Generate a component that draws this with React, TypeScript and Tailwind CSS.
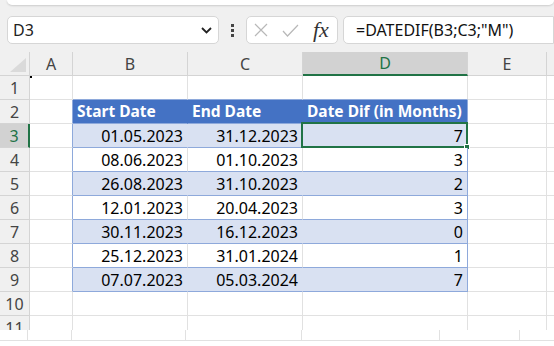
import React from "react";

const cols = [30, 43, 115, 115, 165, 79];
const colLetters = ["A", "B", "C", "D", "E", ""];

const data: [string, string, string][] = [
  ["01.05.2023", "31.12.2023", "7"],
  ["08.06.2023", "01.10.2023", "3"],
  ["26.08.2023", "31.10.2023", "2"],
  ["12.01.2023", "20.04.2023", "3"],
  ["30.11.2023", "16.12.2023", "0"],
  ["25.12.2023", "31.01.2024", "1"],
  ["07.07.2023", "05.03.2024", "7"],
];

function RowHeader({ n, selected }: { n: number; selected?: boolean }) {
  return (
    <div
      className={
        "h-[24px] flex items-center justify-center text-[16px] border-b border-[#d4d4d4] " +
        (selected
          ? "bg-[#d2d2d2] border-r-2 border-r-[#217346] text-[#217346]"
          : "bg-[#f0f0f0] border-r border-r-[#d4d4d4] text-[#444]")
      }
    >
      {n}
    </div>
  );
}

function Cell({
  children,
  className = "",
}: {
  children?: React.ReactNode;
  className?: string;
}) {
  return (
    <div
      className={
        "h-[24px] flex items-center border-b border-r px-[4px] overflow-visible whitespace-nowrap " +
        className
      }
    >
      {children}
    </div>
  );
}

export default function App() {
  const font = { fontFamily: '"Noto Sans", "Open Sans", sans-serif' };
  return (
    <div
      className="w-[554px] h-[346px] bg-[#f0f0f0] overflow-hidden relative"
      style={font}
    >
      {/* top white strip */}
      <div className="ml-[7px] h-[5px] bg-white rounded-b-[6px] shadow-[0_1px_2px_rgba(0,0,0,0.15)]" />

      {/* formula bar */}
      <div className="flex items-center h-[28px] mt-[11px]">
        <div className="ml-[7px] w-[212px] h-[28px] bg-white border border-[#d6d6d6] rounded-[5px] flex items-center justify-between pl-[5px] pr-[6px]">
          <span className="text-[16px] text-[#222]">D3</span>
          <svg width="11" height="7" viewBox="0 0 11 7">
            <path d="M1 1 L5.5 5.5 L10 1" fill="none" stroke="#222" strokeWidth="1.8" />
          </svg>
        </div>
        <div className="w-[27px] flex flex-col items-center gap-[2px]">
          <div className="w-[3px] h-[3px] bg-[#444]" />
          <div className="w-[3px] h-[3px] bg-[#444]" />
          <div className="w-[3px] h-[3px] bg-[#444]" />
        </div>
        <div className="w-[92px] h-[28px] bg-white border border-[#d6d6d6] rounded-[5px] flex items-center pl-[7px]">
          <svg width="14" height="14" viewBox="0 0 14 14">
            <path d="M1 1 L13 13 M13 1 L1 13" stroke="#b8b8b8" strokeWidth="1.2" fill="none" />
          </svg>
          <svg width="17" height="13" viewBox="0 0 17 13" className="ml-[14px]">
            <path d="M1 7 L5.5 12 L16 1" stroke="#b8b8b8" strokeWidth="1.2" fill="none" />
          </svg>
          <span
            className="ml-[14px] text-[22px] italic text-[#333] leading-none"
            style={{ fontFamily: '"Liberation Serif", serif' }}
          >
            fx
          </span>
        </div>
        <div className="ml-[5px] flex-1 h-[28px] bg-white border border-[#d6d6d6] rounded-l-[5px] flex items-center pl-[12px] text-[16px] text-[#111]">
          =DATEDIF(B3;C3;"M")
        </div>
      </div>

      {/* grid */}
      <div className="mt-[8px] h-[278px] overflow-hidden">
        <div
          className="grid"
          style={{ gridTemplateColumns: cols.map((c) => c + "px").join(" ") + " 1fr" }}
        >
          {/* column header row */}
          <div className="h-[24px] bg-[#f0f0f0] border-r border-b border-[#d4d4d4] relative">
            <svg className="absolute left-[10px] top-[6px]" width="16" height="14" viewBox="0 0 16 14">
              <path d="M16 0 L16 14 L0 14 Z" fill="#dadada" />
            </svg>
          </div>
          {colLetters.map((l, idx) => (
            <div
              key={idx}
              className={
                "h-[24px] flex items-center justify-center text-[16px] border-r border-[#d4d4d4] " +
                (l === "D"
                  ? "bg-[#d2d2d2] border-b-2 border-b-[#217346] text-[#217346]"
                  : "bg-[#f0f0f0] border-b text-[#444]")
              }
            >
              {l}
            </div>
          ))}

          {/* row 1 */}
          <RowHeader n={1} />
          <Cell className="bg-white border-[#e1e1e1] relative">
            <div className="absolute left-0 top-0 w-[2px] h-[2px] bg-black" />
          </Cell>
          <Cell className="bg-white border-r-[#e1e1e1] border-b-[#8ea9db]" />
          <Cell className="bg-white border-r-[#e1e1e1] border-b-[#8ea9db]" />
          <Cell className="bg-white border-r-[#e1e1e1] border-b-[#8ea9db]" />
          <Cell className="bg-white border-[#e1e1e1]" />
          <Cell className="bg-white border-[#e1e1e1]" />

          {/* row 2 header */}
          <RowHeader n={2} />
          <Cell className="bg-white border-b-[#e1e1e1] border-r-[#8ea9db]" />
          <Cell className="bg-[#4472c4] border-r-[#4472c4] border-b-[#8ea9db] text-white font-bold text-[15.5px]">
            Start Date
          </Cell>
          <Cell className="bg-[#4472c4] border-r-[#4472c4] border-b-[#8ea9db] text-white font-bold text-[15.5px]">
            End Date
          </Cell>
          <Cell className="bg-[#4472c4] border-r-[#8ea9db] border-b-[#8ea9db] text-white font-bold text-[15.5px]">
            Date Dif (in Months)
          </Cell>
          <Cell className="bg-white border-[#e1e1e1]" />
          <Cell className="bg-white border-[#e1e1e1]" />

          {data.map((r, i) => {
            const banded = i % 2 === 0;
            const bg = banded ? "bg-[#d9e1f2]" : "bg-white";
            const inner = banded ? "border-r-[#d9e1f2]" : "border-r-[#e1e1e1]";
            return (
              <React.Fragment key={i}>
                <RowHeader n={i + 3} selected={i === 0} />
                <Cell className="bg-white border-b-[#e1e1e1] border-r-[#8ea9db]" />
                <Cell className={bg + " " + inner + " border-b-[#8ea9db] justify-end text-[16px] text-black"}>
                  {r[0]}
                </Cell>
                <Cell className={bg + " " + inner + " border-b-[#8ea9db] justify-end text-[16px] text-black"}>
                  {r[1]}
                </Cell>
                <Cell className={bg + " border-r-[#8ea9db] border-b-[#8ea9db] justify-end text-[16px] text-black relative"}>
                  {r[2]}
                  {i === 0 && (
                    <div className="absolute left-[-2px] top-[-2px] right-[-1px] bottom-[-1px] border-2 border-[#217346]">
                      <div className="absolute right-[-4px] bottom-[-4px] w-[6px] h-[6px] bg-[#217346] border border-white" />
                    </div>
                  )}
                </Cell>
                <Cell className="bg-white border-[#e1e1e1]" />
                <Cell className="bg-white border-[#e1e1e1]" />
              </React.Fragment>
            );
          })}

          {[10, 11].map((n) => (
            <React.Fragment key={n}>
              <RowHeader n={n} />
              <Cell className="bg-white border-[#e1e1e1]" />
              <Cell className="bg-white border-[#e1e1e1]" />
              <Cell className="bg-white border-[#e1e1e1]" />
              <Cell className="bg-white border-[#e1e1e1]" />
              <Cell className="bg-white border-[#e1e1e1]" />
              <Cell className="bg-white border-[#e1e1e1]" />
            </React.Fragment>
          ))}
        </div>
      </div>

      {/* bottom ghost strip */}
      <div className="h-[16px] bg-white relative">
        <div
          className="grid h-[11px] border-b border-[#e1e1e1]"
          style={{ gridTemplateColumns: "28px 44px 114px 116px 138px 80px 1fr" }}
        >
          <div className="border-r border-[#e1e1e1]" />
          <div className="border-r border-[#e1e1e1]" />
          <div className="border-r border-[#e1e1e1]" />
          <div className="border-r border-[#e1e1e1]" />
          <div className="border-r border-[#e1e1e1]" />
          <div className="border-r border-[#e1e1e1]" />
          <div />
        </div>
      </div>
    </div>
  );
}
